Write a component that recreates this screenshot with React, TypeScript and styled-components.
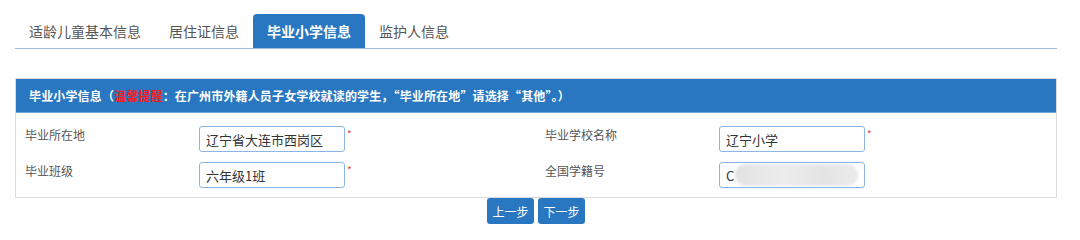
import React from "react";
import styled, { createGlobalStyle } from "styled-components";

const GlobalStyle = createGlobalStyle`
  html, body { margin: 0; padding: 0; background: #fff; }
  body { font-family: "Noto Sans CJK SC", "Liberation Sans", sans-serif; color: #333; }
`;

const BLUE = "#2a77c1";

const Page = styled.div`
  width: 1042px;
  margin-left: 15px;
  display: flex;
  flex-direction: column;
`;

const TabBar = styled.div`
  display: flex;
  padding-top: 14px;
  border-bottom: 1px solid #9fc0e2;
`;

const Tab = styled.div<{ $active?: boolean }>`
  height: 34px;
  padding: 0 14px;
  display: flex;
  align-items: center;
  font-size: 14px;
  line-height: 20px;
  color: ${(p) => (p.$active ? "#fff" : "#555")};
  font-weight: ${(p) => (p.$active ? 700 : 400)};
  background: ${(p) => (p.$active ? BLUE : "transparent")};
  border-radius: 4px 4px 0 0;
  white-space: nowrap;
`;

const Panel = styled.div`
  margin-top: 29px;
  border: 1px solid #dcdcdc;
  display: flex;
  flex-direction: column;
`;

const PanelHeader = styled.div`
  height: 33px;
  background: ${BLUE};
  border-bottom: 1px solid #6fa4d8;
  display: flex;
  align-items: center;
  padding: 0 13px;
  font-size: 12px;
  font-weight: 700;
  letter-spacing: 0.15px;
  color: #fff;
  white-space: nowrap;
`;

const Warn = styled.span`
  color: #ff1a1a;
`;

const PanelBody = styled.div`
  display: grid;
  grid-template-columns: 174px 346px 174px 1fr;
  row-gap: 10px;
  padding: 13px 9px 9px;
`;

const Label = styled.div`
  font-size: 12px;
  line-height: 18px;
  color: #555;
`;

const FieldCell = styled.div`
  display: flex;
  align-items: flex-start;
`;

const InputBox = styled.div`
  box-sizing: border-box;
  width: 146px;
  height: 26px;
  border: 1px solid #8cb5e3;
  border-radius: 3px;
  padding: 0 6px;
  display: flex;
  align-items: center;
  font-size: 13px;
  color: #333;
  white-space: nowrap;
  overflow: hidden;
`;

const Star = styled.span`
  color: #f23a3a;
  font-size: 10px;
  line-height: 10px;
  margin: 3px 0 0 2px;
`;

const Blur = styled.span`
  display: inline-block;
  width: 126px;
  height: 22px;
  margin-left: 1px;
  background: linear-gradient(90deg, #e2e2e2 0%, #ececec 40%, #e4e4e4 70%, #eaeaea 100%);
  border-radius: 11px;
  filter: blur(1.5px);
`;

const Actions = styled.div`
  display: flex;
  justify-content: center;
  gap: 4px;
`;

const Button = styled.button`
  width: 47px;
  height: 26px;
  padding: 0;
  border: none;
  border-radius: 3px;
  background: ${BLUE};
  color: #fff;
  font-family: "Noto Sans CJK SC", "Liberation Sans", sans-serif;
  font-size: 12px;
`;

const tabs = ["适龄儿童基本信息", "居住证信息", "毕业小学信息", "监护人信息"];

export default function App() {
  return (
    <>
      <GlobalStyle />
      <Page>
        <TabBar>
          {tabs.map((t) => (
            <Tab key={t} $active={t === "毕业小学信息"}>
              {t}
            </Tab>
          ))}
        </TabBar>
        <Panel>
          <PanelHeader>
            毕业小学信息（<Warn>温馨提醒</Warn>：在广州市外籍人员子女学校就读的学生，“毕业所在地”请选择“其他”。）
          </PanelHeader>
          <PanelBody>
            <Label>毕业所在地</Label>
            <FieldCell>
              <InputBox>辽宁省大连市西岗区</InputBox>
              <Star>*</Star>
            </FieldCell>
            <Label>毕业学校名称</Label>
            <FieldCell>
              <InputBox>辽宁小学</InputBox>
              <Star>*</Star>
            </FieldCell>
            <Label>毕业班级</Label>
            <FieldCell>
              <InputBox>六年级1班</InputBox>
              <Star>*</Star>
            </FieldCell>
            <Label>全国学籍号</Label>
            <FieldCell>
              <InputBox>
                C<Blur />
              </InputBox>
            </FieldCell>
          </PanelBody>
        </Panel>
        <Actions>
          <Button>上一步</Button>
          <Button>下一步</Button>
        </Actions>
      </Page>
    </>
  );
}
